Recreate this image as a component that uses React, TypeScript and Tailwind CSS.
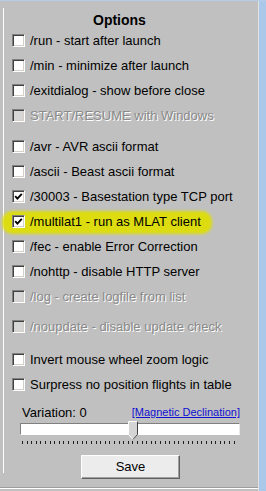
import React from "react";

function Box({ checked, disabled }: { checked?: boolean; disabled?: boolean }) {
  return (
    <div
      className={`relative w-[13px] h-[13px] shrink-0 border border-t-[#808080] border-l-[#808080] border-b-white border-r-white shadow-[inset_1px_1px_0_#404040,inset_-1px_-1px_0_#d4d0c8] ${
        disabled ? "bg-[#d6d6d6]" : "bg-white"
      }`}
    >
      {checked && (
        <svg width="13" height="13" viewBox="0 0 13 13" className="absolute -left-px -top-px">
          <path d="M3.2 6.2 L5.4 8.6 L9.8 3.8" fill="none" stroke="#000" strokeWidth="1.9" />
        </svg>
      )}
    </div>
  );
}

function Row({
  label,
  checked,
  disabled,
  highlight,
  extra = "",
}: {
  label: string;
  checked?: boolean;
  disabled?: boolean;
  highlight?: boolean;
  extra?: string;
}) {
  return (
    <div className={`relative flex items-center h-[25px] ${extra}`}>
      {highlight && (
        <div className="absolute left-[-2px] top-[2px] w-[210px] h-[23px] rounded-[10px] bg-[#dcdc10] blur-[1.5px]" />
      )}
      <div className="relative ml-[8px]">
        <Box checked={checked} disabled={disabled} />
      </div>
      <span
        className={`relative ml-[5px] whitespace-nowrap leading-[15px] ${
          disabled ? "text-[#8a8a8a] [text-shadow:1px_1px_0_#ffffff]" : "text-black"
        }`}
      >
        {label}
      </span>
    </div>
  );
}

export default function App() {
  return (
    <div className="w-[266px] h-[491px] bg-[#c0c0c0] flex border-t border-[#b4cce6] overflow-hidden font-['Liberation_Sans',Arial,sans-serif] text-[13px] text-black">
      <div className="w-[258px] flex flex-col">
        <div className="flex-1 flex">
          <div className="mt-[7px] ml-[3px] w-px h-[465px] bg-white shrink-0" />
          <div className="flex-1 flex flex-col">
            <div className="mt-[11px] h-[16px] pl-[89px] font-bold text-[14px] leading-[16px]">Options</div>
            <Row label="/run - start after launch" />
            <Row label="/min - minimize after launch" />
            <Row label="/exitdialog - show before close" />
            <Row label="START/RESUME with Windows" disabled />
            <Row label="/avr - AVR ascii format" extra="mt-[6px]" />
            <Row label="/ascii - Beast ascii format" />
            <Row label="/30003 - Basestation type TCP port" checked />
            <Row label="/multilat1 - run as MLAT client" checked highlight />
            <Row label="/fec - enable Error Correction" />
            <Row label="/nohttp - disable HTTP server" />
            <Row label="/log - create logfile from list" disabled />
            <Row label="/noupdate - disable update check" disabled extra="mt-[5px]" />
            <Row label="Invert mouse wheel zoom logic" extra="mt-[8px]" />
            <Row label="Surpress no position flights in table" />
            <div className="mt-[8px] ml-[18px] w-[218px] h-[15px] flex items-center justify-between">
              <span className="leading-[15px]">Variation: 0</span>
              <span className="text-[11px] leading-[13px] text-[#1010d0] underline">[Magnetic Declination]</span>
            </div>
            <div className="relative mt-[3px] ml-[16px] w-[220px] h-[22px]">
              <div className="h-[12px] bg-white border border-t-[#808080] border-l-[#808080] border-b-white border-r-[#e8e8e8]" />
              <div className="mt-[6px] mx-[2px] h-[3px] bg-[repeating-linear-gradient(90deg,#202020_0_1px,transparent_1px_4.6px)]" />
              <svg width="10" height="19" viewBox="0 0 10 19" className="absolute left-[108px] top-[-2px]">
                <path d="M0.5 0.5 H9.5 V13.5 L5 18.5 L0.5 13.5 Z" fill="#d4d4d4" stroke="#ffffff" strokeWidth="1" />
                <path d="M9.5 0.5 V13.5 L5 18.5" fill="none" stroke="#404040" strokeWidth="1" />
              </svg>
            </div>
            <div className="mt-[10px] ml-[77px] w-[99px] h-[24px] flex items-center justify-center bg-[#ececec] border border-t-white border-l-white border-b-[#606060] border-r-[#606060] shadow-[inset_-1px_-1px_0_#a0a0a0]">
              Save
            </div>
          </div>
        </div>
        <div className="h-[4px] border-t border-[#9c9c9c]">
          <div className="h-px bg-white" />
        </div>
      </div>
      <div className="w-px bg-[#e2e2e2]" />
      <div className="w-[7px] bg-[#a9c8ea]" />
    </div>
  );
}
